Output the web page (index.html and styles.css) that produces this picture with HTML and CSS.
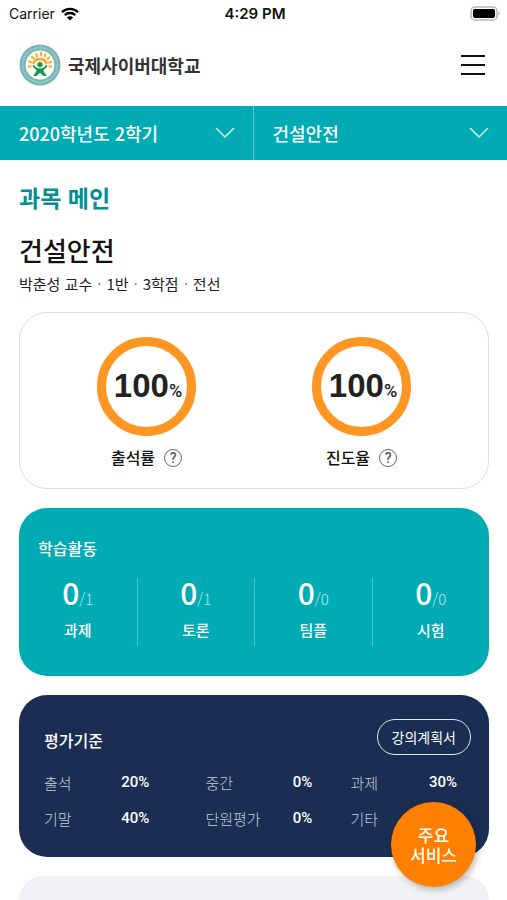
FILE: index.html
```html
<!DOCTYPE html>
<html lang="ko">
  <head>
    <meta charset="UTF-8" />
    <meta name="viewport" content="width=device-width, initial-scale=1.0" />
    <link rel="stylesheet" href="styles.css">
    <title>과목 메인</title>
  </head>
  <body>
    <div class="status-bar">
      <div class="carrier">
        <span>Carrier</span>
        <svg width="18" height="14" viewBox="0 0 18 14" fill="none" stroke="#000" stroke-width="2.4">
          <path d="M1 5.2a11.3 11.3 0 0 1 16 0" />
          <path d="M3.8 8.2a7.4 7.4 0 0 1 10.4 0" />
          <path d="M9 13.6 5.9 10.5a4.4 4.4 0 0 1 6.2 0z" fill="#000" stroke="none" />
        </svg>
      </div>
      <span class="time">4:29 PM</span>
      <svg class="battery" width="31" height="15" viewBox="0 0 31 15">
        <rect x="1" y="1" width="26" height="13" rx="4" fill="#fff" stroke="#b5b5b5" stroke-width="1.5" />
        <rect x="3" y="3" width="22" height="9" rx="2" fill="#000" />
        <path d="M28.5 5.2v4.6a2.6 2.6 0 0 0 0-4.6z" fill="#b5b5b5" />
      </svg>
    </div>

    <header class="header">
      <a href="#" class="logo">
        <svg width="42" height="42" viewBox="0 0 42 42">
          <circle cx="21" cy="21" r="20.5" fill="#74b5b6" />
          <circle cx="21" cy="21" r="17.4" fill="none" stroke="#a9d0d0" stroke-width="2" stroke-dasharray="1.3 1.1" />
          <circle cx="21" cy="21" r="14.4" fill="#fffef6" />
          <g stroke="#f8ad32" stroke-width="2" stroke-linecap="round">
            <path d="M9.3 22.5h2.4M10 17.4l2.3.9M13 13l1.9 1.8M17.2 10l.9 2.4M22 8.8v2.6M26.6 10.2l-1 2.3M30.3 13.4l-1.9 1.7M32.3 17.8l-2.4.8M32.7 22.6h-2.4" />
          </g>
          <path d="M14.2 20a7.2 7.2 0 0 1 13.6 0" fill="none" stroke="#f8ad32" stroke-width="2.6" />
          <circle cx="21" cy="20.6" r="2.7" fill="#159b50" />
          <path d="M14.5 20.8c2.2 2.8 4.2 3.7 6.5 3.7s4.3-.9 6.5-3.7l1 1.3c-1.3 2.2-2.7 3.4-4.3 4.1l3.6 5.7h-3.4L21 28.8l-3.4 3.1h-3.4l3.6-5.7c-1.6-.7-3-1.9-4.3-4.1z" fill="#159b50" />
        </svg>
        <span>국제사이버대학교</span>
      </a>
      <button class="menu" type="button" aria-label="메뉴">
        <svg width="24" height="20" viewBox="0 0 24 20" stroke="#111" stroke-width="2">
          <path d="M0 1h24M0 10h24M0 19h24" />
        </svg>
      </button>
    </header>

    <nav class="filters">
      <label class="filter">
        <select name="semester" aria-label="학기">
          <option>2020학년도 2학기</option>
        </select>
        <svg width="20" height="12" viewBox="0 0 20 12"><path d="M1 1l9 9 9-9" /></svg>
      </label>
      <label class="filter">
        <select name="course" aria-label="과목">
          <option>건설안전</option>
        </select>
        <svg width="20" height="12" viewBox="0 0 20 12"><path d="M1 1l9 9 9-9" /></svg>
      </label>
    </nav>

    <main class="content">
      <h1>과목 메인</h1>
      <h2>건설안전</h2>
      <p class="meta">박춘성 교수<i>·</i>1반<i>·</i>3학점<i>·</i>전선</p>

      <section class="card rates">
        <div class="rate">
          <div class="ring"><strong>100</strong><span>%</span></div>
          <div class="rate-label">
            <span>출석률</span>
            <button class="help" type="button" aria-label="출석률 도움말">?</button>
          </div>
        </div>
        <div class="rate">
          <div class="ring"><strong>100</strong><span>%</span></div>
          <div class="rate-label">
            <span>진도율</span>
            <button class="help" type="button" aria-label="진도율 도움말">?</button>
          </div>
        </div>
      </section>

      <section class="card activity">
        <h3>학습활동</h3>
        <ul>
          <li><p><strong>0</strong>/1</p>과제</li>
          <li><p><strong>0</strong>/1</p>토론</li>
          <li><p><strong>0</strong>/0</p>팀플</li>
          <li><p><strong>0</strong>/0</p>시험</li>
        </ul>
      </section>

      <section class="card grading">
        <div class="grading-head">
          <h3>평가기준</h3>
          <button class="syllabus" type="button">강의계획서</button>
        </div>
        <table>
          <tr>
            <th scope="row">출석</th>
            <td>20%</td>
            <th scope="row">중간</th>
            <td>0%</td>
            <th scope="row">과제</th>
            <td>30%</td>
          </tr>
          <tr>
            <th scope="row">기말</th>
            <td>40%</td>
            <th scope="row">단원평가</th>
            <td>0%</td>
            <th scope="row">기타</th>
            <td></td>
          </tr>
        </table>
      </section>

      <section class="card next"></section>
    </main>

    <button class="services" type="button">주요<br>서비스</button>
  </body>
</html>
```
FILE: styles.css
```css
* {
  box-sizing: border-box;
}
body {
  display: flex;
  flex-direction: column;
  min-height: 100vh;
  margin: 0;
  background: #fff;
  color: #111;
  font-family: "Noto Sans CJK KR", sans-serif;
}
h1,
h2,
h3,
p,
ul {
  margin: 0;
  padding: 0;
}
button,
select {
  padding: 0;
  border: none;
  background: none;
  color: inherit;
  font-family: inherit;
  cursor: pointer;
}
svg {
  display: block;
}

.status-bar {
  display: grid;
  grid-template-columns: 1fr auto 1fr;
  align-items: center;
  height: 27px;
  padding: 0 6px 0 9px;
  font-family: Inter, sans-serif;
  font-size: 14px;
}
.carrier {
  display: flex;
  align-items: center;
  gap: 6px;
}
.time {
  font-size: 15px;
  font-weight: 600;
}
.battery {
  justify-self: end;
}

.header {
  display: flex;
  justify-content: space-between;
  align-items: center;
  height: 79px;
  padding: 0 22px 4px 19px;
}
.logo {
  display: flex;
  align-items: center;
  gap: 7px;
  color: #333;
  font-size: 18px;
  font-weight: 700;
  text-decoration: none;
}

.filters {
  display: grid;
  grid-template-columns: 1fr 1fr;
  background: #00abb4;
  color: #fff;
}
.filter {
  display: grid;
  align-items: center;
  height: 54px;
}
.filter:first-child {
  border-right: 1px solid #5bcbd1;
}
.filter select,
.filter svg {
  grid-area: 1 / 1;
}
.filter select {
  width: 100%;
  height: 100%;
  padding: 0 48px 0 19px;
  appearance: none;
  font-size: 18px;
  font-weight: 500;
}
.filter svg {
  justify-self: end;
  margin-right: 18px;
  fill: none;
  stroke: #d5f5f6;
  stroke-width: 1.5;
  pointer-events: none;
}
.filter option {
  color: #111;
}

.content {
  display: flex;
  flex-direction: column;
  flex: 1;
  padding: 19px 18px 0 19px;
}
h1 {
  color: #008f95;
  font-size: 23px;
  font-weight: 700;
  line-height: 36px;
}
h2 {
  margin-top: 16px;
  font-size: 26px;
  font-weight: 500;
  line-height: 38px;
}
h3 {
  font-size: 16px;
  font-weight: 500;
  line-height: 24px;
}
.meta {
  margin-bottom: 14px;
  color: #222;
  font-size: 15px;
  line-height: 29px;
}
.meta i {
  margin: 0 5px;
  color: #888;
  font-style: normal;
}

.card {
  margin-bottom: 19px;
  border-radius: 28px;
}
.rates {
  display: grid;
  grid-template-columns: 1fr 1fr;
  padding: 24px 19px 17px;
  border: 1px solid #ddd;
}
.rate {
  display: flex;
  flex-direction: column;
  align-items: center;
  gap: 8px;
}
.ring {
  display: flex;
  justify-content: center;
  align-items: baseline;
  width: 99px;
  height: 99px;
  padding-left: 3px;
  border: 9px solid #ff9624;
  border-radius: 50%;
  color: #222;
  font-family: "Liberation Sans", sans-serif;
  font-size: 18px;
  line-height: 80px;
}
.ring strong {
  font-size: 33px;
}
.ring span {
  font-family: Roboto, sans-serif;
  font-weight: 500;
}
.rate-label {
  display: flex;
  align-items: center;
  gap: 9px;
  font-size: 16px;
  font-weight: 500;
  line-height: 27px;
}
.help {
  width: 18px;
  height: 18px;
  border: 1px solid #666;
  border-radius: 50%;
  color: #555;
  font-family: Roboto, sans-serif;
  font-size: 14px;
  font-weight: 500;
  line-height: 16px;
}

.activity {
  padding: 28px 0 30px;
  background: #00abb4;
  color: #fff;
}
.activity h3 {
  padding-left: 19px;
}
.activity ul {
  display: grid;
  grid-template-columns: repeat(4, 1fr);
  margin-top: 18px;
  list-style: none;
}
.activity li {
  height: 68px;
  font-size: 15px;
  font-weight: 500;
  line-height: 32px;
  text-align: center;
}
.activity li + li {
  border-left: 1px solid #4dc5cb;
}
.activity p {
  height: 36px;
  color: #b9eaec;
  font-size: 15px;
  font-weight: 300;
  line-height: 28px;
}
.activity strong {
  color: #fff;
  font-size: 30px;
  font-weight: 500;
}

.grading {
  padding: 24px 18px 21px 25px;
  background: #1a2d53;
  color: #fff;
}
.grading-head {
  display: flex;
  justify-content: space-between;
  align-items: center;
}
.grading h3 {
  padding-top: 6px;
}
.syllabus {
  height: 36px;
  padding: 0 14px;
  border: 1px solid #e3e8f0;
  border-radius: 18px;
  font-size: 14px;
}
.grading table {
  width: 100%;
  margin-top: 9px;
  padding-right: 14px;
  border-spacing: 0;
  table-layout: fixed;
  white-space: nowrap;
}
.grading th,
.grading td {
  height: 36px;
  padding: 0;
  font-size: 15px;
}
.grading th {
  width: 16%;
  color: #c3cbdb;
  font-weight: 300;
  text-align: left;
}
.grading td {
  width: 10%;
  font-family: Roboto, sans-serif;
  font-weight: 500;
  text-align: right;
}
.grading td:nth-child(2) {
  padding-right: 2px;
}
.grading th:nth-child(3) {
  width: 28%;
  padding-left: 54px;
}
.grading td:nth-child(4) {
  width: 11%;
}
.grading th:nth-child(5) {
  width: 21%;
  padding-left: 38px;
}
.grading td:last-child {
  width: 14%;
}

.next {
  flex: 1;
  min-height: 24px;
  margin-bottom: 0;
  border-radius: 28px 28px 0 0;
  background: #f0f2f5;
}

.services {
  position: fixed;
  right: 31px;
  bottom: 13px;
  width: 85px;
  height: 85px;
  border-radius: 50%;
  background: #ff8000;
  box-shadow: 2px 3px 6px rgba(0, 0, 0, 0.25);
  color: #fff;
  font-size: 17px;
  font-weight: 500;
  line-height: 20px;
}
```
